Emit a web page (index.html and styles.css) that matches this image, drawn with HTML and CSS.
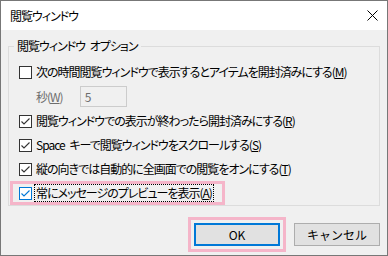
FILE: index.html
```html
<!DOCTYPE html>
<html lang="ja">
<head>
<meta charset="utf-8">
<link rel="stylesheet" href="styles.css">
</head>
<body>
<div class="dialog">
  <div class="titlebar">
    <span class="title">閲覧ウィンドウ</span>
    <svg class="close" width="11" height="11" viewBox="0 0 11 11"><path d="M0.5 0.5 L10.5 10.5 M10.5 0.5 L0.5 10.5" stroke="#000" stroke-width="1" fill="none"/></svg>
  </div>
  <div class="content">
    <fieldset class="group">
      <legend class="legend">閲覧ウィンドウ オプション</legend>
      <div class="rows">
        <div class="row">
          <span class="cb"></span>
          <span class="label">次の時間閲覧ウィンドウで表示するとアイテムを開封済みにする(<u>M</u>)</span>
        </div>
        <div class="row sub">
          <span class="label dim">秒(<u>W</u>)</span>
          <span class="field">5</span>
        </div>
        <div class="row">
          <span class="cb checked"><svg width="11" height="11" viewBox="0 0 11 11"><path d="M1.5 5.5 L4 8 L9.5 2.5" stroke="#333" stroke-width="1.1" fill="none"/></svg></span>
          <span class="label">閲覧ウィンドウでの表示が終わったら開封済みにする(<u>R</u>)</span>
        </div>
        <div class="row">
          <span class="cb checked"><svg width="11" height="11" viewBox="0 0 11 11"><path d="M1.5 5.5 L4 8 L9.5 2.5" stroke="#333" stroke-width="1.1" fill="none"/></svg></span>
          <span class="label">Space キーで閲覧ウィンドウをスクロールする(<u>S</u>)</span>
        </div>
        <div class="row">
          <span class="cb checked"><svg width="11" height="11" viewBox="0 0 11 11"><path d="M1.5 5.5 L4 8 L9.5 2.5" stroke="#333" stroke-width="1.1" fill="none"/></svg></span>
          <span class="label">縦の向きでは自動的に全画面での閲覧をオンにする(<u>T</u>)</span>
        </div>
        <div class="row mark">
          <span class="cb checked focus"><svg width="11" height="11" viewBox="0 0 11 11"><path d="M1.5 5.5 L4 8 L9.5 2.5" stroke="#0078d7" stroke-width="1.1" fill="none"/></svg></span>
          <span class="label dotted">常にメッセージのプレビューを表示(<u>A</u>)</span>
        </div>
      </div>
    </fieldset>
    <div class="buttons">
      <div class="btnmark"><button class="btn primary">OK</button></div>
      <button class="btn">キャンセル</button>
    </div>
  </div>
</div>
</body>
</html>
```
FILE: styles.css
```css
html, body {
  margin: 0;
  padding: 0;
  background: #f0f0f0;
}
body {
  font-family: "Noto Sans CJK JP", sans-serif;
  font-size: 12px;
  color: #000;
  font-feature-settings: "palt";
}
.dialog {
  width: 388px;
  height: 256px;
  box-sizing: border-box;
  border: 1px solid #777;
  background: #f0f0f0;
  display: flex;
  flex-direction: column;
}
.titlebar {
  height: 29px;
  background: #fff;
  display: flex;
  align-items: center;
  justify-content: space-between;
  padding: 0 9px 0 9px;
  flex: none;
}
.title {
  font-size: 12px;
  line-height: 16px;
  letter-spacing: -1px;
}
.close {
  display: block;
}
.content {
  padding: 8px 7px 0 7px;
  display: flex;
  flex-direction: column;
}
.group {
  margin: 0;
  padding: 0;
  border: 1px solid #dcdcdc;
  height: 168px;
  box-sizing: border-box;
  min-width: 0;
}
.legend {
  margin-left: 5px;
  padding: 0 3px;
  line-height: 16px;
  letter-spacing: -1px;
  word-spacing: 3px;
}
.rows {
  padding-top: 6px;
  display: flex;
  flex-direction: column;
}
.row {
  display: flex;
  align-items: center;
  height: 24px;
  padding-left: 10px;
}
.cb {
  width: 13px;
  height: 13px;
  box-sizing: border-box;
  border: 1px solid #333;
  background: #fff;
  display: flex;
  align-items: center;
  justify-content: center;
  flex: none;
  margin-right: 3px;
}
.cb svg {
  display: block;
}
.cb.focus {
  border-color: #0078d7;
}
.label {
  line-height: 16px;
  white-space: nowrap;
  padding: 0 1px;
  letter-spacing: -1px;
  word-spacing: 3px;
}
.dim {
  color: #6d6d6d;
}
.sub {
  height: 25px;
  padding-left: 26px;
}
.field {
  margin-left: 16px;
  width: 47px;
  height: 21px;
  box-sizing: border-box;
  border: 1px solid #cccccc;
  background: #f0f0f0;
  color: #6d6d6d;
  line-height: 19px;
  padding-left: 4px;
}
.mark {
  align-self: flex-start;
  margin-left: 1px;
  border: 3px solid #f5b5c9;
  padding: 0 9px 0 6px;
  height: 18px;
}
.dotted {
  outline: 1px dotted #000;
}
.buttons {
  display: flex;
  justify-content: flex-end;
  align-items: center;
  gap: 8px;
  margin-top: 11px;
}
.btnmark {
  border: 3px solid #f5b5c9;
  padding: 3px;
  display: flex;
}
.btn {
  font-family: "Noto Sans CJK JP", sans-serif;
  font-size: 12px;
  width: 86px;
  height: 23px;
  box-sizing: border-box;
  border: 1px solid #adadad;
  background: #e1e1e1;
  color: #000;
  padding: 0;
  margin: 0;
  line-height: 20px;
}
.btn.primary {
  border: 2px solid #0078d7;
}
```
